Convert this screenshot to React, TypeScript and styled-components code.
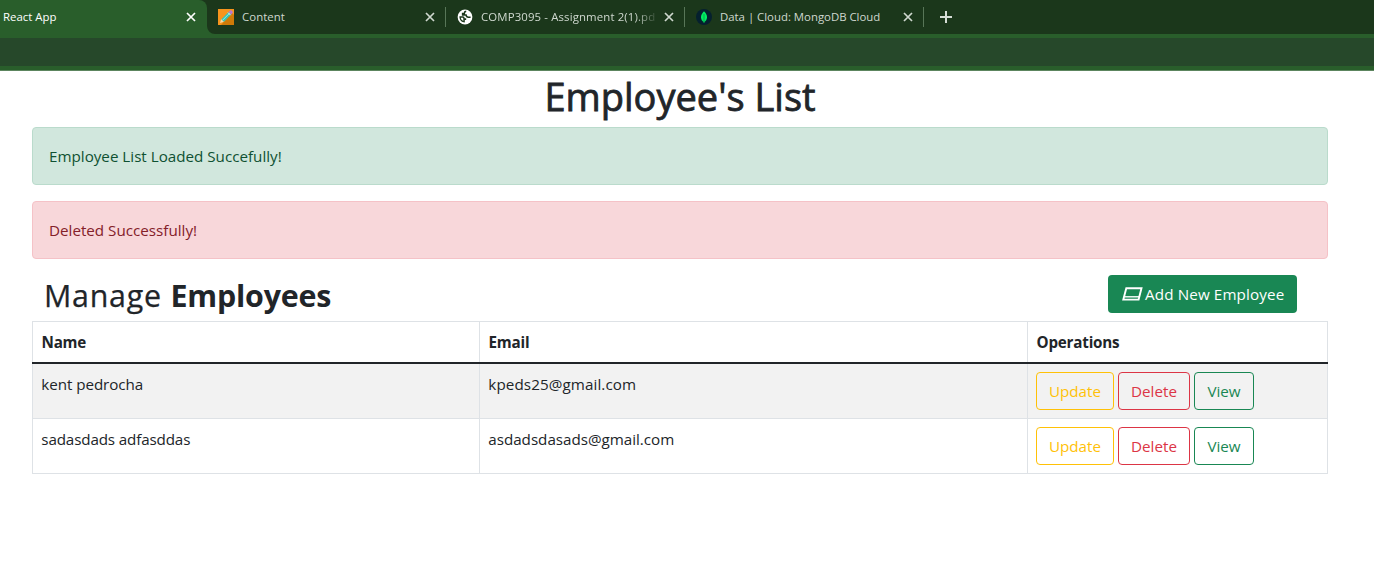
import React from "react";
import styled, { createGlobalStyle } from "styled-components";

const GlobalStyle = createGlobalStyle`
  *, *::before, *::after { box-sizing: border-box; }
  body {
    margin: 0;
    background: #fff;
    color: #212529;
    font: 400 15.2px/24px "Open Sans", "Noto Sans", sans-serif;
  }
`;

/* Browser chrome */

const TabStrip = styled.div`
  display: flex;
  height: 34px;
  background: #1b371b;
  color: #cfd8cf;
  font-size: 11.4px;
  line-height: 34px;
`;

const ActiveTab = styled.div`
  display: flex;
  align-items: center;
  justify-content: space-between;
  width: 207px;
  padding: 0 11px 0 3px;
  border-radius: 0 8px 0 0;
  background: #295e2b;
  color: #fff;
`;

const TabCurve = styled.svg`
  display: block;
  align-self: flex-end;
  width: 8px;
  height: 8px;
`;

const Tab = styled.div<{ $first?: boolean }>`
  display: flex;
  align-items: center;
  width: ${(p) => (p.$first ? 231 : 239)}px;
  padding-left: ${(p) => (p.$first ? 3 : 11)}px;
  background: linear-gradient(#587658, #587658) right 0 top 7px / 1px 20px no-repeat;
`;

const Favicon = styled.svg`
  flex: none;
  display: block;
  width: 16px;
  height: 16px;
`;

const TabTitle = styled.span<{ $fade?: boolean; $spacing?: number }>`
  flex: none;
  width: 174px;
  margin-left: 8px;
  overflow: hidden;
  white-space: nowrap;
  letter-spacing: ${(p) => p.$spacing ?? 0.05}px;
  mask-image: ${(p) => (p.$fade ? "linear-gradient(to right, #000 154px, transparent 178px)" : "none")};
`;

const CloseIcon = styled.svg`
  flex: none;
  display: block;
  width: 10px;
  height: 10px;
  margin-left: 9px;
  stroke: currentColor;
  stroke-width: 1.7;
  fill: none;
`;

const NewTab = styled.svg`
  align-self: center;
  display: block;
  width: 12px;
  height: 12px;
  margin-left: 16px;
  stroke: #d5ddd5;
  stroke-width: 2;
  fill: none;
`;

const BookmarkBar = styled.div`
  height: 36px;
  background: #26482a;
  border-top: 4px solid #295e2b;
  border-bottom: 4px solid #295e2b;
`;

const ChromeEdge = styled.div`
  height: 1px;
  background: #5c855e;
`;

/* Page */

const Page = styled.main`
  width: 1296px;
  margin-left: 32px;
`;

const Title = styled.h1`
  height: 48px;
  margin: 0 0 8px;
  padding-top: 1px;
  font-size: 38px;
  font-weight: 500;
  line-height: 48px;
  text-align: center;
  -webkit-text-stroke: 0.8px currentColor;
`;

const Alert = styled.div<{ $tone: "success" | "danger" }>`
  height: 58px;
  margin-bottom: 16px;
  padding: 16px;
  border: 1px solid ${(p) => (p.$tone === "success" ? "#badbcc" : "#f5c2c7")};
  border-radius: 4px;
  background: ${(p) => (p.$tone === "success" ? "#d1e7dd" : "#f8d7da")};
  color: ${(p) => (p.$tone === "success" ? "#0f5132" : "#842029")};
`;

const TitleRow = styled.div`
  display: flex;
  justify-content: space-between;
  align-items: flex-start;
  height: 46px;
  padding: 0 31px 0 12px;
`;

const Subtitle = styled.h2`
  margin: 0;
  padding-top: 2px;
  font-size: 30.4px;
  font-weight: 400;
  line-height: 38px;
  letter-spacing: 0.75px;
  -webkit-text-stroke: 0.25px currentColor;

  b {
    font-weight: 700;
    letter-spacing: -0.2px;
    -webkit-text-stroke: 0;
  }
`;

const AddButton = styled.button`
  display: flex;
  align-items: center;
  width: 189px;
  height: 38px;
  padding: 0 0 1px 14px;
  border: 0;
  border-radius: 4px;
  background: #198754;
  color: #fff;
  font: inherit;
  letter-spacing: 0.13px;
  white-space: nowrap;
`;

const CardIcon = styled.svg`
  flex: none;
  display: block;
  width: 21px;
  height: 14px;
  margin-right: 2px;
  stroke: #fff;
  fill: none;
`;

const Grid = styled.div`
  border-left: 1px solid #dee2e6;
`;

const Row = styled.div<{ $striped?: boolean }>`
  display: grid;
  grid-template-columns: 447px 548px 300px;
  height: 55px;
  background: ${(p) => (p.$striped ? "#f2f2f2" : "#fff")};
`;

const HeadRow = styled(Row)`
  height: 41px;
  border-top: 1px solid #dee2e6;
  font-weight: 700;
  letter-spacing: -0.2px;
`;

const HeadRule = styled.div`
  height: 2px;
  margin-left: -1px;
  background: #212529;
`;

const HeadCell = styled.div`
  padding: 8px 8px 0 8.5px;
  border-right: 1px solid #dee2e6;
`;

const Cell = styled.div<{ $spacing?: number }>`
  padding: 8px 8px 0 8.3px;
  border-right: 1px solid #dee2e6;
  border-bottom: 1px solid #dee2e6;
  letter-spacing: ${(p) => p.$spacing ?? 0}px;
`;

const ActionCell = styled(Cell)`
  display: flex;
  align-items: flex-start;
  gap: 4px;
  padding-left: 8px;
`;

const Action = styled.button<{ $color: string; $width: number }>`
  width: ${(p) => p.$width}px;
  height: 38px;
  padding: 0 0 1px;
  border: 1px solid ${(p) => p.$color};
  border-radius: 4px;
  background: transparent;
  color: ${(p) => p.$color};
  font: inherit;
`;

const employees = [
  { name: "kent pedrocha", email: "kpeds25@gmail.com", nameSpacing: -0.06, emailSpacing: 0.1 },
  { name: "sadasdads adfasddas", email: "asdadsdasads@gmail.com", nameSpacing: -0.14, emailSpacing: -0.02 },
];

const Close = () => (
  <CloseIcon viewBox="0 0 10 10">
    <path d="M1 1l8 8M9 1L1 9" />
  </CloseIcon>
);

export default function App() {
  return (
    <>
      <GlobalStyle />
      <TabStrip>
        <ActiveTab>
          <span>React App</span>
          <Close />
        </ActiveTab>
        <TabCurve viewBox="0 0 8 8">
          <path d="M0 0a8 8 0 0 0 8 8H0z" fill="#295e2b" />
        </TabCurve>
        <Tab $first>
          <Favicon viewBox="0 0 16 16">
            <path d="M0 0h16v16H0z" fill="#f7941d" />
            <path d="M14 4l2 2v10H3z" fill="#cf7a08" />
            <path d="M2 14l1.2-4L6 12.8z" fill="#f6d9a8" />
            <path d="M3.4 10.2L10.6 3l2.6 2.600L6 12.8z" fill="#35c4b5" />
            <path d="M4.6 11.2l7-7" stroke="#9beadf" strokeWidth="1" />
            <path d="M10.6 3l1-1a1.8 1.8 0 0 1 2.6 2.6l-1 1z" fill="#b878d0" />
            <path d="M10 3.6l2.6 2.6" stroke="#dce6ee" strokeWidth="1" />
          </Favicon>
          <TabTitle>Content</TabTitle>
          <Close />
        </Tab>
        <Tab>
          <Favicon viewBox="0 0 16 16">
            <circle cx="8" cy="8" r="7.4" fill="#fff" />
            <path
              d="M2.400 7.300h3.400c1.500 0 1.800.8 1.800 2h1.600v1.600H7.800v2.600C4.500 13.400 2.300 10.900 2.400 7.300z"
              fill="#1b371b"
            />
            <path
              d="M9.200 2.300c-1.700.2-1.900.9-1.900 2.100H5.600v1.700h3.500c.2 1.500.8 2.100 2.200 2.100h2.300"
              fill="none"
              stroke="#1b371b"
              strokeWidth="1.500"
            />
            <path d="M3.800 8.800h1.500c.8 0 1 .4 1 1.200v1.900C4.800 11.400 4 10.300 3.800 8.800z" fill="#fff" />
          </Favicon>
          <TabTitle $fade $spacing={0.13}>
            COMP3095 - Assignment 2(1).pdf
          </TabTitle>
          <Close />
        </Tab>
        <Tab>
          <Favicon viewBox="0 0 16 16">
            <circle cx="8" cy="8" r="8" fill="#05202f" />
            <path d="M8 2.300c2 2 3 3.700 3 5.900S9.800 12 8 13.300C6.200 12 5 10.400 5 8.200S6 4.300 8 2.300z" fill="#00ed64" />
            <path d="M8 5v9" stroke="#05a94d" strokeWidth="1" />
          </Favicon>
          <TabTitle $spacing={-0.01}>Data | Cloud: MongoDB Cloud</TabTitle>
          <Close />
        </Tab>
        <NewTab viewBox="0 0 12 12">
          <path d="M6 0v12M0 6h12" />
        </NewTab>
      </TabStrip>
      <BookmarkBar />
      <ChromeEdge />
      <Page>
        <Title>Employee's List</Title>
        <Alert $tone="success">Employee List Loaded Succefully!</Alert>
        <Alert $tone="danger">Deleted Successfully!</Alert>
        <TitleRow>
          <Subtitle>
            Manage <b>Employees</b>
          </Subtitle>
          <AddButton>
            <CardIcon viewBox="0 0 21 14">
              <path d="M4.300 1.200H19.500L16.600 12.600H1.300z" strokeWidth="1.900" />
              <path d="M2.500 9.800H17" strokeWidth="1.400" />
            </CardIcon>
            Add New Employee
          </AddButton>
        </TitleRow>
        <Grid>
          <HeadRow>
            <HeadCell>Name</HeadCell>
            <HeadCell>Email</HeadCell>
            <HeadCell>Operations</HeadCell>
          </HeadRow>
          <HeadRule />
          {employees.map((e, i) => (
            <Row key={e.email} $striped={i % 2 === 0}>
              <Cell $spacing={e.nameSpacing}>{e.name}</Cell>
              <Cell $spacing={e.emailSpacing}>{e.email}</Cell>
              <ActionCell>
                <Action $color="#ffc107" $width={78}>Update</Action>
                <Action $color="#dc3545" $width={72}>Delete</Action>
                <Action $color="#198754" $width={60}>View</Action>
              </ActionCell>
            </Row>
          ))}
        </Grid>
      </Page>
    </>
  );
}
